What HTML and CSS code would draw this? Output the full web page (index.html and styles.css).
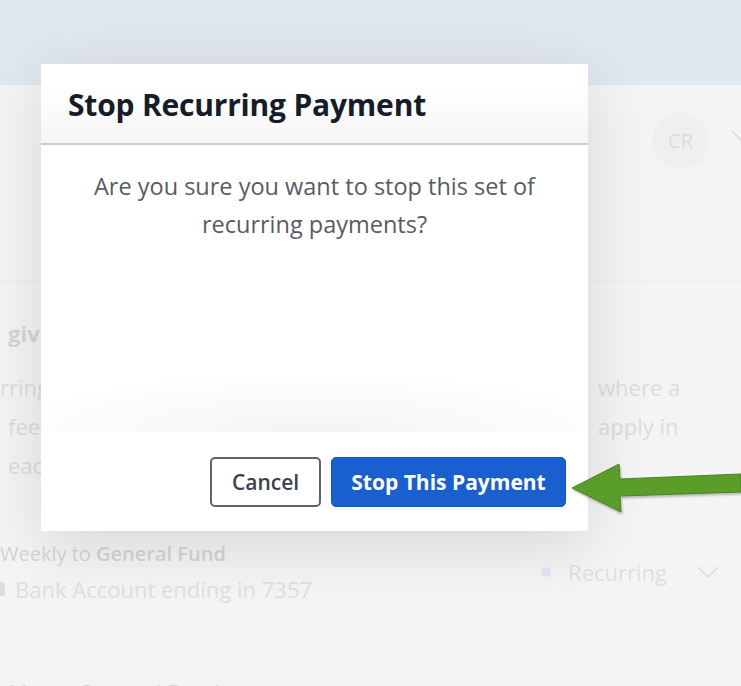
FILE: index.html
```html
<!DOCTYPE html>
<html lang="en">
<head>
  <meta charset="UTF-8">
  <meta name="viewport" content="width=device-width, initial-scale=1.0">
  <title>Stop Recurring Payment</title>
  <link rel="stylesheet" href="styles.css">
</head>
<body>

<div id="page">
  <div class="topbar"></div>
  <div class="account-row">
    <div class="avatar">CR</div>
    <svg class="account-chevron" width="20" height="12" viewBox="0 0 20 12"><path d="M1 1l9 9 9-9" fill="none" stroke="#dcdcdc" stroke-width="1.6"/></svg>
  </div>

  <div class="content">
    <h2 class="section-title">giving</h2>
    <div class="intro">
      <div class="intro-line"><span class="shift">rring gifts are set up</span><span>where a</span></div>
      <div class="intro-line"><span>fees</span><span>apply in</span></div>
      <div class="intro-line"><span>each</span><span></span></div>
    </div>

    <div class="gift">
      <div class="gift-info">
        <div class="gift-title shift">Weekly to <b>General Fund</b></div>
        <div class="gift-account"><span class="bank-icon"></span>Bank Account ending in 7357</div>
      </div>
      <div class="gift-status">
        <span class="dot"></span>Recurring
        <svg width="22" height="12" viewBox="0 0 22 12"><path d="M1 1l10 10 10-10" fill="none" stroke="#dcdcdc" stroke-width="1.6"/></svg>
      </div>
    </div>

    <div class="gift-title next">Mon... <b>General Fund</b></div>
  </div>
</div>

<div id="modal">
  <div class="modal-header">
    <h1>Stop Recurring Payment</h1>
  </div>
  <div class="modal-body">
    <p>Are you sure you want to stop this set of recurring payments?</p>
  </div>
  <div class="modal-footer">
    <button class="btn btn-cancel">Cancel</button>
    <button class="btn btn-stop">Stop This Payment</button>
  </div>
</div>

<svg id="arrow" width="176" height="64" viewBox="0 0 176 64">
  <polygon points="7,33 54,9 55,24 176,19 176,37 55,41 56,57" fill="#5a9d29" stroke="#4a8520" stroke-width="1"/>
</svg>

</body>
</html>
```

FILE: styles.css
```css
body {
  font-family: 'Open Sans', 'Noto Sans', sans-serif;
  margin: 0;
  width: 741px;
  height: 686px;
  overflow: hidden;
  position: relative;
  background-color: #f4f4f4;
}

#page {
  height: 686px;
  overflow: hidden;
  color: #dadada;
}

.topbar {
  height: 85px;
  background-color: #e1e7f1;
}

.account-row {
  height: 197px;
  display: flex;
  align-items: flex-start;
  justify-content: flex-end;
  gap: 22px;
  padding-top: 27px;
  box-sizing: border-box;
  border-bottom: 1px solid #ededed;
  margin-right: -10px;
}

.avatar {
  width: 57px;
  height: 57px;
  border-radius: 50%;
  background-color: #efefef;
  color: #dcdcdc;
  font-size: 20px;
  display: flex;
  align-items: center;
  justify-content: center;
}

.account-chevron {
  margin-top: 18px;
}

.content {
  padding-left: 8px;
}

.section-title {
  margin: 36px 0 0;
  font-size: 22px;
  font-weight: 700;
  color: #d6d6d6;
  line-height: 30px;
}

.intro {
  margin-top: 20px;
  font-size: 22px;
  line-height: 39px;
  color: #dcdcdc;
}

.intro-line {
  display: grid;
  grid-template-columns: 590px 1fr;
  white-space: nowrap;
}

.shift {
  margin-left: -8px;
}

.gift {
  display: flex;
  justify-content: space-between;
  align-items: center;
  margin-top: 52px;
  padding-right: 22px;
}

.gift-title {
  font-size: 20px;
  color: #d4d4d4;
  line-height: 34px;
}

.gift-title b {
  font-weight: 600;
}

.gift-account {
  font-size: 22px;
  color: #dfdfdf;
  line-height: 36px;
  display: flex;
  align-items: center;
  margin-left: -12px;
}

.bank-icon {
  width: 9px;
  height: 14px;
  background-color: #dedede;
  border-radius: 2px;
  margin-right: 10px;
}

.gift-status {
  display: flex;
  align-items: center;
  font-size: 22px;
  color: #dfdfdf;
  margin-top: 0;
}

.dot {
  width: 10px;
  height: 10px;
  border-radius: 50%;
  background-color: #e4e6f4;
  margin-right: 17px;
}

.gift-status svg {
  margin-left: 30px;
}

.next {
  margin-top: 68px;
  font-size: 22px;
}

#modal {
  position: absolute;
  left: 41px;
  top: 64px;
  width: 547px;
  height: 467px;
  background-color: #ffffff;
  display: flex;
  flex-direction: column;
  box-shadow: 0 14px 60px rgba(0, 0, 0, 0.12);
}

.modal-header {
  height: 81px;
  box-sizing: border-box;
  padding: 2px 27px 0;
  display: flex;
  align-items: center;
  background: linear-gradient(#ffffff 30%, #f5f5f5);
  border-bottom: 2px solid #cdcdcd;
}

.modal-header h1 {
  margin: 0;
  font-size: 30px;
  font-weight: 700;
  color: #161d2a;
  letter-spacing: -0.2px;
}

.modal-body {
  flex: 1;
  padding: 22px 50px 0;
  text-align: center;
  background: radial-gradient(ellipse 60% 60px at 50% 100%, #f4f4f4, #ffffff 100%);
}

.modal-body p {
  margin: 0;
  font-size: 23.5px;
  line-height: 38px;
  color: #575c63;
}

.modal-footer {
  height: 99px;
  box-sizing: border-box;
  padding: 25px 22px 0;
  display: flex;
  justify-content: flex-end;
  align-items: flex-start;
  gap: 10px;
  background-color: #ffffff;
}

.btn {
  font-family: 'Open Sans', 'Noto Sans', sans-serif;
  height: 50px;
  font-size: 21px;
  border-radius: 5px;
  cursor: pointer;
  padding: 0;
}

.btn-cancel {
  width: 111px;
  background-color: #ffffff;
  border: 2px solid #5d6572;
  color: #3a4250;
  font-weight: 600;
}

.btn-stop {
  width: 235px;
  background-color: #1a5fcf;
  border: 1px solid #1656bf;
  color: #ffffff;
  font-weight: 700;
}

#arrow {
  position: absolute;
  left: 565px;
  top: 455px;
  filter: drop-shadow(1px 2px 1px rgba(0, 0, 0, 0.25));
}
```
